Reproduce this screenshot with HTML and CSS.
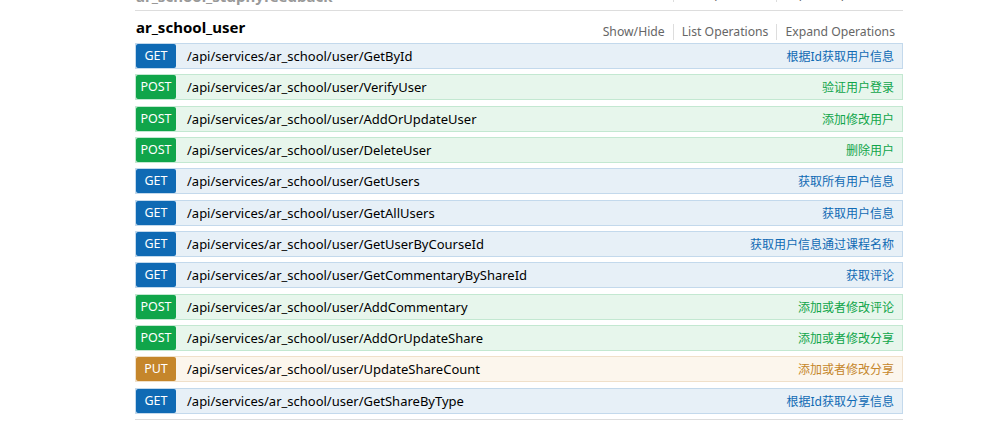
FILE: index.html
```html
<!DOCTYPE html>
<html>
<head>
<meta charset="utf-8">
<link rel="stylesheet" href="styles.css">
</head>
<body>
<div class="wrap">
  <div class="heading prev">
    <h2 class="title prev-title">ar_school_stuphyfeedback</h2>
    <ul class="links">
      <li>Show/Hide</li>
      <li>List Operations</li>
      <li>Expand Operations</li>
    </ul>
  </div>
  <div class="heading">
    <h2 class="title">ar_school_user</h2>
    <ul class="links">
      <li>Show/Hide</li>
      <li>List Operations</li>
      <li>Expand Operations</li>
    </ul>
  </div>
  <ul class="ops">
    <li class="op get"><span class="method">GET</span><span class="path">/api/services/ar_school/user/GetById</span><span class="desc">根据Id获取用户信息</span></li>
    <li class="op post"><span class="method">POST</span><span class="path">/api/services/ar_school/user/VerifyUser</span><span class="desc">验证用户登录</span></li>
    <li class="op post"><span class="method">POST</span><span class="path">/api/services/ar_school/user/AddOrUpdateUser</span><span class="desc">添加修改用户</span></li>
    <li class="op post"><span class="method">POST</span><span class="path">/api/services/ar_school/user/DeleteUser</span><span class="desc">删除用户</span></li>
    <li class="op get"><span class="method">GET</span><span class="path">/api/services/ar_school/user/GetUsers</span><span class="desc">获取所有用户信息</span></li>
    <li class="op get"><span class="method">GET</span><span class="path">/api/services/ar_school/user/GetAllUsers</span><span class="desc">获取用户信息</span></li>
    <li class="op get"><span class="method">GET</span><span class="path">/api/services/ar_school/user/GetUserByCourseId</span><span class="desc">获取用户信息通过课程名称</span></li>
    <li class="op get"><span class="method">GET</span><span class="path">/api/services/ar_school/user/GetCommentaryByShareId</span><span class="desc">获取评论</span></li>
    <li class="op post"><span class="method">POST</span><span class="path">/api/services/ar_school/user/AddCommentary</span><span class="desc">添加或者修改评论</span></li>
    <li class="op post"><span class="method">POST</span><span class="path">/api/services/ar_school/user/AddOrUpdateShare</span><span class="desc">添加或者修改分享</span></li>
    <li class="op put"><span class="method">PUT</span><span class="path">/api/services/ar_school/user/UpdateShareCount</span><span class="desc">添加或者修改分享</span></li>
    <li class="op get"><span class="method">GET</span><span class="path">/api/services/ar_school/user/GetShareByType</span><span class="desc">根据Id获取分享信息</span></li>
  </ul>
</div>
</body>
</html>
```

FILE: styles.css
```css
html, body {
  margin: 0;
  padding: 0;
  background: #fff;
}
body {
  font-family: "Noto Sans", "Noto Sans CJK SC", sans-serif;
  overflow: hidden;
}
.wrap {
  width: 768px;
  margin-left: 135px;
  margin-top: -10px;
}
.heading {
  height: 32px;
  display: flex;
  align-items: center;
  justify-content: space-between;
}
.heading.prev {
  height: 20px;
  border-bottom: 1px solid #ddd;
  align-items: flex-start;
}
.title {
  margin: 0 0 0 1px;
  font-size: 15px;
  font-weight: bold;
  color: #000;
  line-height: 20px;
}
.prev-title {
  color: #999;
  margin-top: -4px;
}
.links {
  list-style: none;
  margin: 9px 8px 0 0;
  padding: 0;
  display: flex;
  font-size: 12.2px;
  color: #666;
  line-height: 16px;
}
.prev .links {
  margin-top: -4px;
}
.links li {
  padding: 0 8px 0 8px;
  border-left: 1px solid #ddd;
}
.links li:first-child {
  border-left: none;
  padding-left: 0;
}
.links li:last-child {
  padding-right: 0;
}
.ops {
  list-style: none;
  margin: 0;
  padding: 0;
  border-bottom: 1px solid #ddd;
}
.op {
  height: 24px;
  border: 1px solid;
  margin-bottom: 5.333px;
  display: flex;
  align-items: center;
}
.method {
  width: 40px;
  height: 24px;
  line-height: 24px;
  text-align: center;
  color: #fff;
  font-size: 12.5px;
  border-radius: 2px;
}
.path {
  margin-left: 11px;
  font-size: 13px;
  color: #000;
}
.desc {
  margin-left: auto;
  padding-right: 8px;
  font-size: 12px;
}
.get { background: #e7f0f7; border-color: #c3d9ec; }
.get .method { background: #0f6ab4; }
.get .desc { color: #0f6ab4; }
.post { background: #e7f6ec; border-color: #c3e8d1; }
.post .method { background: #10a54a; }
.post .desc { color: #10a54a; }
.put { background: #fcf6ed; border-color: #f0e0ca; }
.put .method { background: #c5862b; }
.put .desc { color: #c5862b; }
```
